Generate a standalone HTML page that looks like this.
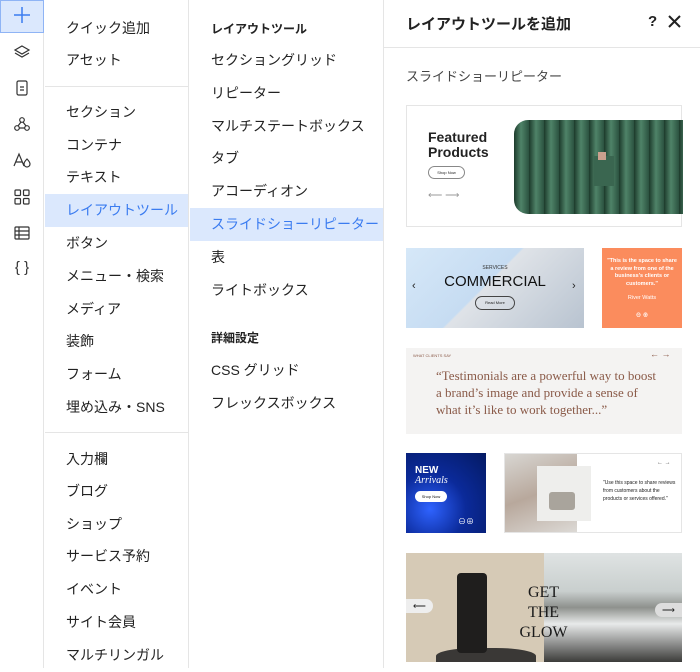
<!DOCTYPE html>
<html><head><meta charset="utf-8"><style>
*{margin:0;padding:0;box-sizing:border-box}
body{width:700px;height:668px;overflow:hidden;background:#fff;font-family:"Liberation Sans","Noto Sans CJK JP",sans-serif;color:#222;position:relative}
.abs{position:absolute}
.bar{left:0;top:0;width:44px;height:668px;border-right:1px solid #e5e5e5}
.ic{position:absolute;left:12px;width:20px;height:20px}
.col2{left:45px;top:0;width:144px;height:668px;border-right:1px solid #e5e5e5}
.col3{left:190px;top:0;width:194px;height:668px;border-right:1px solid #e5e5e5}
.it{position:absolute;left:0;right:0;height:33px;line-height:33px;padding-left:21px;font-size:14px;color:#222;white-space:nowrap}
.sel{background:#dbe8fd;color:#3b7cf0}
.hd{font-size:12px;font-weight:bold}
.hr{position:absolute;left:0;right:0;height:1px;background:#e5e5e5}
</style></head><body>
<div class="abs bar">
 <div class="abs" style="left:0;top:0;width:44px;height:33px;background:#dbe8fd;border:1px solid #8fb4f5"></div>
 <svg class="ic" style="top:5px" viewBox="0 0 20 20"><path d="M10 2v16M2 10h16" stroke="#3b7cf0" stroke-width="1.5"/></svg>
 <svg class="ic" style="top:42px" viewBox="0 0 20 20" fill="none" stroke="#333" stroke-width="1.2"><path d="M10 4l7 4-7 4-7-4z"/><path d="M3 11l7 4 7-4"/></svg>
 <svg class="ic" style="top:78px" viewBox="0 0 20 20" fill="none" stroke="#333" stroke-width="1.2"><rect x="5" y="3" width="10" height="14" rx="1.5"/><path d="M8 9h4M8 12h4"/></svg>
 <svg class="ic" style="top:114px" viewBox="0 0 20 20" fill="none" stroke="#333" stroke-width="1.2"><circle cx="10" cy="6" r="2.3"/><circle cx="5" cy="14" r="2.3"/><circle cx="15" cy="14" r="2.3"/><path d="M9 8l-3 4M11 8l3 4M7.3 14h5.4"/></svg>
 <svg class="ic" style="top:150px" viewBox="0 0 20 20" fill="none" stroke="#333" stroke-width="1.2"><path d="M2 16L7 4l5 12M4 12h6"/><path d="M15 9c2 2 3 3.5 3 5a3 3 0 0 1-6 0c0-1.5 1-3 3-5z"/></svg>
 <svg class="ic" style="top:187px" viewBox="0 0 20 20" fill="none" stroke="#333" stroke-width="1.2"><rect x="3" y="3" width="5.5" height="5.5" rx="1"/><rect x="11.5" y="3" width="5.5" height="5.5" rx="1"/><rect x="3" y="11.5" width="5.5" height="5.5" rx="1"/><rect x="11.5" y="11.5" width="5.5" height="5.5" rx="1"/></svg>
 <svg class="ic" style="top:223px" viewBox="0 0 20 20" fill="none" stroke="#333" stroke-width="1.2"><rect x="3" y="4" width="14" height="12" rx="1"/><path d="M3 8h14M3 12h14M7 4v12"/></svg>
 <div class="abs" style="left:4px;top:259px;width:36px;text-align:center;font-size:15px;color:#333;white-space:nowrap;font-family:'Liberation Sans',sans-serif">{ }</div>
</div>
<div class="abs col2">
 <div class="it" style="top:12px">クイック追加</div>
 <div class="it" style="top:44px">アセット</div>
 <div class="hr" style="top:86px"></div>
 <div class="it" style="top:96px">セクション</div>
 <div class="it" style="top:129px">コンテナ</div>
 <div class="it" style="top:161px">テキスト</div>
 <div class="it sel" style="top:194px">レイアウトツール</div>
 <div class="it" style="top:227px">ボタン</div>
 <div class="it" style="top:260px">メニュー・検索</div>
 <div class="it" style="top:293px">メディア</div>
 <div class="it" style="top:325px">装飾</div>
 <div class="it" style="top:358px">フォーム</div>
 <div class="it" style="top:391px">埋め込み・SNS</div>
 <div class="hr" style="top:432px"></div>
 <div class="it" style="top:443px">入力欄</div>
 <div class="it" style="top:475px">ブログ</div>
 <div class="it" style="top:508px">ショップ</div>
 <div class="it" style="top:540px">サービス予約</div>
 <div class="it" style="top:573px">イベント</div>
 <div class="it" style="top:606px">サイト会員</div>
 <div class="it" style="top:639px">マルチリンガル</div>
</div>
<div class="abs col3">
 <div class="it hd" style="top:13px">レイアウトツール</div>
 <div class="it" style="top:44px">セクショングリッド</div>
 <div class="it" style="top:77px">リピーター</div>
 <div class="it" style="top:110px">マルチステートボックス</div>
 <div class="it" style="top:142px">タブ</div>
 <div class="it" style="top:175px">アコーディオン</div>
 <div class="it sel" style="top:208px">スライドショーリピーター</div>
 <div class="it" style="top:241px">表</div>
 <div class="it" style="top:274px">ライトボックス</div>
 <div class="it hd" style="top:322px">詳細設定</div>
 <div class="it" style="top:354px">CSS グリッド</div>
 <div class="it" style="top:387px">フレックスボックス</div>
</div>
<div class="abs" style="left:384px;top:0;width:316px;height:668px">
 <div class="abs" style="left:22px;top:13px;font-size:15px;font-weight:bold">レイアウトツールを追加</div>
 <div class="abs" style="left:264px;top:13px;font-size:15px;font-weight:bold">?</div>
 <svg class="abs" style="left:284px;top:15px" width="13" height="13" viewBox="0 0 13 13"><path d="M1 1l11 11M12 1L1 12" stroke="#222" stroke-width="2"/></svg>
 <div class="hr" style="top:47px"></div>
 <div class="abs" style="left:22px;top:66px;font-size:13px;color:#444">スライドショーリピーター</div>
</div>
<div class="abs" style="left:406px;top:105px;width:276px;height:122px;border:1px solid #e5e5e5;background:#fff">
 <div class="abs" style="left:21px;top:24px;font-size:14px;font-weight:bold;line-height:15px">Featured<br>Products</div>
 <div class="abs" style="left:21px;top:60px;width:37px;height:13px;border:1px solid #888;border-radius:7px;font-size:4px;text-align:center;line-height:11px">Shop Now</div>
 <div class="abs" style="left:21px;top:84px;font-size:10px;color:#999">⟵ ⟶</div>
 <div class="abs" style="left:107px;top:14px;width:169px;height:94px;border-radius:14px 0 0 14px;background:repeating-linear-gradient(90deg,#1c3a2b 0,#4f8368 7px,#2b5240 15px)"></div>
 <div class="abs" style="left:187px;top:50px;width:20px;height:30px;background:#3a6650"></div>
 <div class="abs" style="left:191px;top:46px;width:8px;height:8px;background:#caa08e"></div>
</div>
<div class="abs" style="left:406px;top:248px;width:178px;height:80px;background:linear-gradient(135deg,#d6e8f8 0,#c6dcf2 45%,#dfe3e8 46%,#b8c3d0 100%);overflow:hidden">
 <div class="abs" style="left:0;right:0;top:17px;text-align:center;font-size:5px;color:#333">SERVICES</div>
 <div class="abs" style="left:0;right:0;top:25px;text-align:center;font-size:15px;color:#111">COMMERCIAL</div>
 <div class="abs" style="left:69px;top:48px;width:40px;height:14px;border:1px solid #444;border-radius:7px;font-size:4px;text-align:center;line-height:12px">Read More</div>
 <div class="abs" style="left:6px;top:32px;font-size:11px">‹</div><div class="abs" style="left:166px;top:32px;font-size:11px">›</div>
</div>
<div class="abs" style="left:602px;top:248px;width:80px;height:80px;background:#fb8c5d;color:#fff;font-size:5.5px;font-weight:bold;text-align:center;padding:10px 5px;line-height:7.5px">"This is the space to share a review from one of the business's clients or customers."<div style="margin-top:7px;font-weight:normal">River Watts</div><div style="margin-top:10px">⊖ ⊕</div></div>
<div class="abs" style="left:406px;top:348px;width:276px;height:86px;background:#f4f3f2">
 <div class="abs" style="left:7px;top:5px;font-size:4px;color:#8a5a48">WHAT CLIENTS SAY</div>
 <div class="abs" style="left:244px;top:1px;font-size:9px;color:#8a5a48">← →</div>
 <div class="abs" style="left:30px;top:19px;width:225px;font-family:'Liberation Serif',serif;font-size:13px;line-height:17px;color:#8a5a48">“Testimonials are a powerful way to boost a brand’s image and provide a sense of what it’s like to work together...”</div>
</div>
<div class="abs" style="left:406px;top:453px;width:80px;height:80px;background:radial-gradient(circle at 30% 70%,#2f63ff 0,#0b2a9a 45%,#041a63 100%);color:#fff">
 <div class="abs" style="left:9px;top:12px;font-size:10px;font-weight:bold">NEW</div>
 <div class="abs" style="left:9px;top:22px;font-size:10px;font-style:italic;font-family:'Liberation Serif',serif">Arrivals</div>
 <div class="abs" style="left:9px;top:38px;width:32px;height:11px;background:#fff;border-radius:6px;color:#111;font-size:4px;text-align:center;line-height:11px">Shop Now</div>
 <div class="abs" style="left:52px;top:63px;font-size:8px">⊖⊕</div>
</div>
<div class="abs" style="left:504px;top:453px;width:178px;height:80px;border:1px solid #e5e5e5;background:#fff">
 <div class="abs" style="left:0;top:0;width:72px;height:78px;background:linear-gradient(160deg,#d8d6d2,#b8a89c 50%,#dcd9d5)"></div>
 <div class="abs" style="left:32px;top:12px;width:54px;height:55px;background:#eeeeec"></div>
 <div class="abs" style="left:44px;top:38px;width:26px;height:18px;background:#a9a49c;border-radius:3px"></div>
 <div class="abs" style="left:152px;top:6px;font-size:6px;color:#555">← →</div>
 <div class="abs" style="left:98px;top:25px;width:74px;font-size:5px;line-height:8px;color:#222">"Use this space to share reviews from customers about the products or services offered."</div>
</div>
<div class="abs" style="left:406px;top:553px;width:276px;height:109px;overflow:hidden">
 <div class="abs" style="left:0;top:0;width:138px;height:109px;background:#d6cab6"></div>
 <div class="abs" style="left:138px;top:0;width:138px;height:109px;background:linear-gradient(180deg,#dfe3e3 0,#c9cfce 35%,#8e918d 50%,#e8eaea 65%,#3c3c3a 100%)"></div>
 <div class="abs" style="left:30px;top:95px;width:100px;height:20px;background:#3a3836;border-radius:40% 40% 0 0"></div>
 <div class="abs" style="left:51px;top:20px;width:30px;height:80px;background:#1f1e1d;border-radius:4px"></div>
 <div class="abs" style="left:110px;top:30px;font-family:'Liberation Serif',serif;font-size:16px;line-height:20px;text-align:center;width:55px;color:#1a1a1a">GET<br>THE<br>GLOW</div>
 <div class="abs" style="left:0;top:46px;width:27px;height:14px;background:#eee;border-radius:0 7px 7px 0;font-size:9px;line-height:14px;text-align:center">⟵</div>
 <div class="abs" style="left:249px;top:50px;width:27px;height:14px;background:#ddd;border-radius:7px 0 0 7px;font-size:9px;line-height:14px;text-align:center">⟶</div>
</div>
</body></html>
